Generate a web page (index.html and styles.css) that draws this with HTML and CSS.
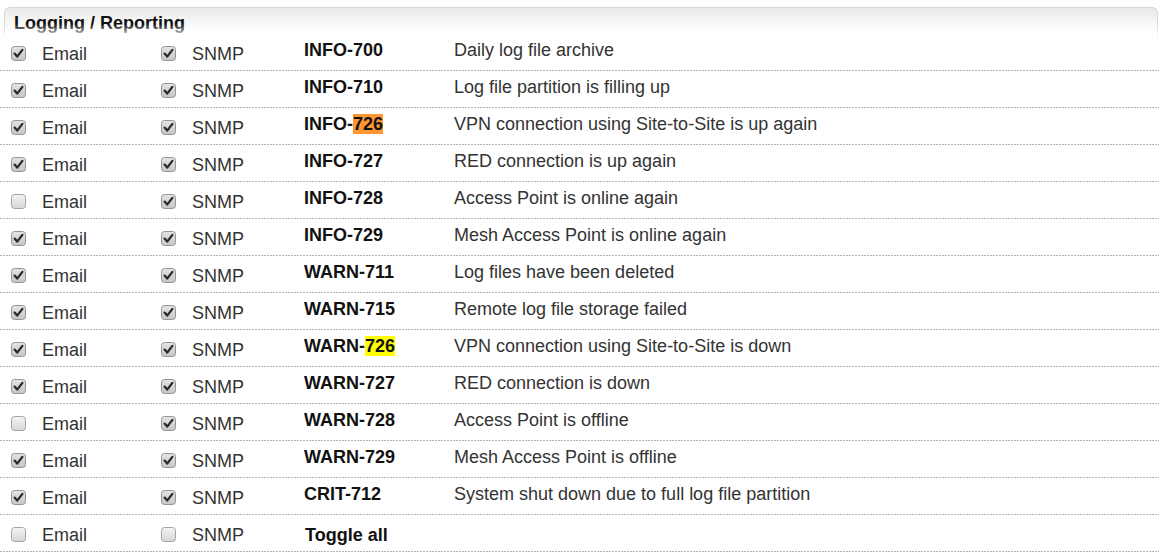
FILE: index.html
```html
<!DOCTYPE html>
<html>
<head>
<meta charset="utf-8">
<link rel="stylesheet" href="styles.css">
</head>
<body>
<svg class="sprite" width="0" height="0" aria-hidden="true">
  <defs>
    <linearGradient id="gOff" x1="0" y1="0" x2="0" y2="1">
      <stop offset="0" stop-color="#f4f4f4"/>
      <stop offset="1" stop-color="#d6d6d6"/>
    </linearGradient>
    <linearGradient id="gOn" x1="0" y1="0" x2="0" y2="1">
      <stop offset="0" stop-color="#e4e4e4"/>
      <stop offset="1" stop-color="#c6c6c6"/>
    </linearGradient>
    <symbol id="cbOff" viewBox="0 0 15 15">
      <rect x="0.5" y="0.5" width="14" height="14" rx="3" fill="url(#gOff)" stroke="#a4a4a4"/>
    </symbol>
    <symbol id="cbOn" viewBox="0 0 15 15">
      <rect x="0.5" y="0.5" width="14" height="14" rx="3" fill="url(#gOn)" stroke="#959595"/>
      <path d="M3.6 7.6 L6.2 10.6 L11.4 3.9" fill="none" stroke="#2b2b2b" stroke-width="2.3" stroke-linecap="round" stroke-linejoin="round"/>
    </symbol>
  </defs>
</svg>

<div class="panel">
  <div class="panel-head">Logging / Reporting</div>

  <div class="row">
    <div class="opt"><svg class="cb"><use href="#cbOn"/></svg><span>Email</span></div>
    <div class="opt"><svg class="cb"><use href="#cbOn"/></svg><span>SNMP</span></div>
    <div class="code">INFO-700</div>
    <div class="desc">Daily log file archive</div>
  </div>
  <div class="row">
    <div class="opt"><svg class="cb"><use href="#cbOn"/></svg><span>Email</span></div>
    <div class="opt"><svg class="cb"><use href="#cbOn"/></svg><span>SNMP</span></div>
    <div class="code">INFO-710</div>
    <div class="desc">Log file partition is filling up</div>
  </div>
  <div class="row">
    <div class="opt"><svg class="cb"><use href="#cbOn"/></svg><span>Email</span></div>
    <div class="opt"><svg class="cb"><use href="#cbOn"/></svg><span>SNMP</span></div>
    <div class="code">INFO-<span class="hl-active">726</span></div>
    <div class="desc">VPN connection using Site-to-Site is up again</div>
  </div>
  <div class="row">
    <div class="opt"><svg class="cb"><use href="#cbOn"/></svg><span>Email</span></div>
    <div class="opt"><svg class="cb"><use href="#cbOn"/></svg><span>SNMP</span></div>
    <div class="code">INFO-727</div>
    <div class="desc">RED connection is up again</div>
  </div>
  <div class="row">
    <div class="opt"><svg class="cb"><use href="#cbOff"/></svg><span>Email</span></div>
    <div class="opt"><svg class="cb"><use href="#cbOn"/></svg><span>SNMP</span></div>
    <div class="code">INFO-728</div>
    <div class="desc">Access Point is online again</div>
  </div>
  <div class="row">
    <div class="opt"><svg class="cb"><use href="#cbOn"/></svg><span>Email</span></div>
    <div class="opt"><svg class="cb"><use href="#cbOn"/></svg><span>SNMP</span></div>
    <div class="code">INFO-729</div>
    <div class="desc">Mesh Access Point is online again</div>
  </div>
  <div class="row">
    <div class="opt"><svg class="cb"><use href="#cbOn"/></svg><span>Email</span></div>
    <div class="opt"><svg class="cb"><use href="#cbOn"/></svg><span>SNMP</span></div>
    <div class="code">WARN-711</div>
    <div class="desc">Log files have been deleted</div>
  </div>
  <div class="row">
    <div class="opt"><svg class="cb"><use href="#cbOn"/></svg><span>Email</span></div>
    <div class="opt"><svg class="cb"><use href="#cbOn"/></svg><span>SNMP</span></div>
    <div class="code">WARN-715</div>
    <div class="desc">Remote log file storage failed</div>
  </div>
  <div class="row">
    <div class="opt"><svg class="cb"><use href="#cbOn"/></svg><span>Email</span></div>
    <div class="opt"><svg class="cb"><use href="#cbOn"/></svg><span>SNMP</span></div>
    <div class="code">WARN-<span class="hl">726</span></div>
    <div class="desc">VPN connection using Site-to-Site is down</div>
  </div>
  <div class="row">
    <div class="opt"><svg class="cb"><use href="#cbOn"/></svg><span>Email</span></div>
    <div class="opt"><svg class="cb"><use href="#cbOn"/></svg><span>SNMP</span></div>
    <div class="code">WARN-727</div>
    <div class="desc">RED connection is down</div>
  </div>
  <div class="row">
    <div class="opt"><svg class="cb"><use href="#cbOff"/></svg><span>Email</span></div>
    <div class="opt"><svg class="cb"><use href="#cbOn"/></svg><span>SNMP</span></div>
    <div class="code">WARN-728</div>
    <div class="desc">Access Point is offline</div>
  </div>
  <div class="row">
    <div class="opt"><svg class="cb"><use href="#cbOn"/></svg><span>Email</span></div>
    <div class="opt"><svg class="cb"><use href="#cbOn"/></svg><span>SNMP</span></div>
    <div class="code">WARN-729</div>
    <div class="desc">Mesh Access Point is offline</div>
  </div>
  <div class="row">
    <div class="opt"><svg class="cb"><use href="#cbOn"/></svg><span>Email</span></div>
    <div class="opt"><svg class="cb"><use href="#cbOn"/></svg><span>SNMP</span></div>
    <div class="code">CRIT-712</div>
    <div class="desc">System shut down due to full log file partition</div>
  </div>
  <div class="row">
    <div class="opt"><svg class="cb"><use href="#cbOff"/></svg><span>Email</span></div>
    <div class="opt"><svg class="cb"><use href="#cbOff"/></svg><span>SNMP</span></div>
    <div class="code toggle">Toggle all</div>
    <div class="desc"></div>
  </div>
</div>
</body>
</html>
```

FILE: styles.css
```css
html, body {
  margin: 0;
  padding: 0;
  background: #ffffff;
}

body {
  font-family: "Liberation Sans", Arial, sans-serif;
  font-size: 18px;
  color: #333333;
}

.sprite {
  position: absolute;
  width: 0;
  height: 0;
  overflow: hidden;
}

.panel {
  width: 1159px;
  padding-top: 7px;
}

.panel-head {
  position: relative;
  box-sizing: border-box;
  margin-left: 4px;
  width: 1154px;
  height: 31px;
  margin-bottom: -4.2px;
  padding: 5px 10px 0 9px;
  border: 1px solid #d6d6d6;
  border-bottom: none;
  border-radius: 6px 6px 0 0;
  background: linear-gradient(#e9e9e9 0%, #f6f6f6 45%, #ffffff 85%);
  font-weight: bold;
  line-height: 20px;
  color: #111111;
}

.panel-head::after {
  content: "";
  position: absolute;
  left: -1px;
  right: -1px;
  bottom: 0;
  height: 14px;
  background: linear-gradient(rgba(255,255,255,0), #ffffff);
}

.row {
  box-sizing: border-box;
  height: 37px;
  display: grid;
  grid-template-columns: 150px 143px 150px 1fr;
  align-items: start;
  padding-left: 11px;
  background-image: repeating-linear-gradient(to right, #b3b3b3 0 2px, transparent 2px 3px);
  background-size: 100% 1px;
  background-position: left bottom;
  background-repeat: no-repeat;
}

.opt {
  display: flex;
  align-items: center;
  padding-top: 10.4px;
  line-height: 20px;
  height: 20px;
}

.cb {
  width: 15px;
  height: 15px;
  flex: none;
  margin-top: -2px;
  margin-right: 16px;
}

.code {
  padding-top: 6px;
  line-height: 20px;
  font-weight: bold;
  color: #111111;
}

.code.toggle {
  padding-top: 10.4px;
  padding-left: 1px;
}

.desc {
  padding-top: 6px;
  line-height: 20px;
  color: #333333;
}

.hl-active {
  background: #ff9632;
}

.hl {
  background: #ffff00;
}
```
